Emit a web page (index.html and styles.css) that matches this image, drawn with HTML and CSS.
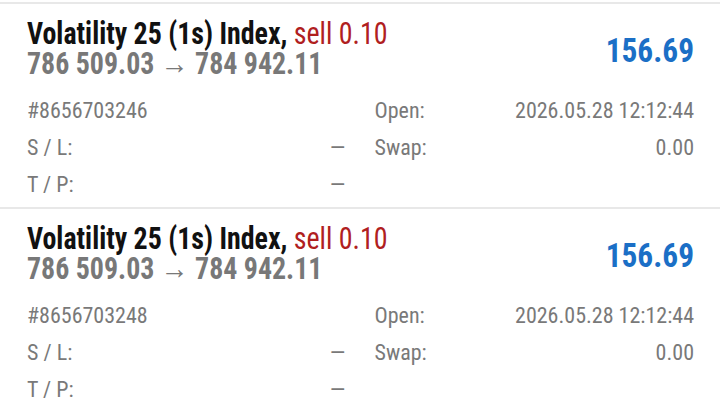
FILE: index.html
```html
<!DOCTYPE html>
<html lang="en">
  <head>
    <meta charset="UTF-8" />
    <meta name="viewport" content="width=device-width, initial-scale=1.0" />
    <title>Positions</title>
    <link rel="stylesheet" href="styles.css">
  </head>
  <body>
    <div class="list">
      <div class="trade">
        <div class="trade-head">
          <div class="trade-info">
            <div class="symbol">Volatility 25 (1s) Index, <span class="sell">sell 0.10</span></div>
            <div class="prices">786 509.03 &rarr; 784 942.11</div>
          </div>
          <div class="profit">156.69</div>
        </div>
        <div class="details">
          <div class="cell"><span>#8656703246</span></div>
          <div class="cell"><span>Open:</span><span>2026.05.28 12:12:44</span></div>
          <div class="cell"><span>S / L:</span><span class="dash">&ndash;</span></div>
          <div class="cell"><span>Swap:</span><span>0.00</span></div>
          <div class="cell"><span>T / P:</span><span class="dash">&ndash;</span></div>
          <div class="cell"></div>
        </div>
      </div>
      <div class="trade">
        <div class="trade-head">
          <div class="trade-info">
            <div class="symbol">Volatility 25 (1s) Index, <span class="sell">sell 0.10</span></div>
            <div class="prices">786 509.03 &rarr; 784 942.11</div>
          </div>
          <div class="profit">156.69</div>
        </div>
        <div class="details">
          <div class="cell"><span>#8656703248</span></div>
          <div class="cell"><span>Open:</span><span>2026.05.28 12:12:44</span></div>
          <div class="cell"><span>S / L:</span><span class="dash">&ndash;</span></div>
          <div class="cell"><span>Swap:</span><span>0.00</span></div>
          <div class="cell"><span>T / P:</span><span class="dash">&ndash;</span></div>
          <div class="cell"></div>
        </div>
      </div>
    </div>
  </body>
</html>
```

FILE: styles.css
```css
body {
  font-family: 'Roboto Condensed', Roboto, sans-serif;
  margin: 0;
  padding-top: 2px;
  background-color: #fff;
  overflow: hidden;
}
.trade {
  border-top: 2px solid #e8e8e8;
  padding: 15px 26px 0 27px;
  height: 188px;
}
.trade-head {
  display: flex;
  justify-content: space-between;
  align-items: center;
}
.symbol, .prices {
  font-size: 31px;
  line-height: 30px;
  font-weight: bold;
  transform: scaleX(0.9);
  transform-origin: left;
  white-space: nowrap;
}
.symbol {
  color: #111;
}
.sell {
  font-weight: normal;
  color: #b0201e;
}
.prices {
  color: #787878;
}
.profit {
  font-size: 33px;
  font-weight: bold;
  color: #1b6fc6;
  padding-top: 3px;
  transform: scaleX(0.95);
  transform-origin: right;
}
.details {
  display: grid;
  grid-template-columns: 1fr 1fr;
  column-gap: 28px;
  margin-top: 13px;
  font-size: 22px;
  line-height: 37px;
  color: #797979;
}
.cell {
  display: flex;
  justify-content: space-between;
}
.dash {
  display: inline-block;
  transform: scaleX(1.4);
  transform-origin: right;
}
```
